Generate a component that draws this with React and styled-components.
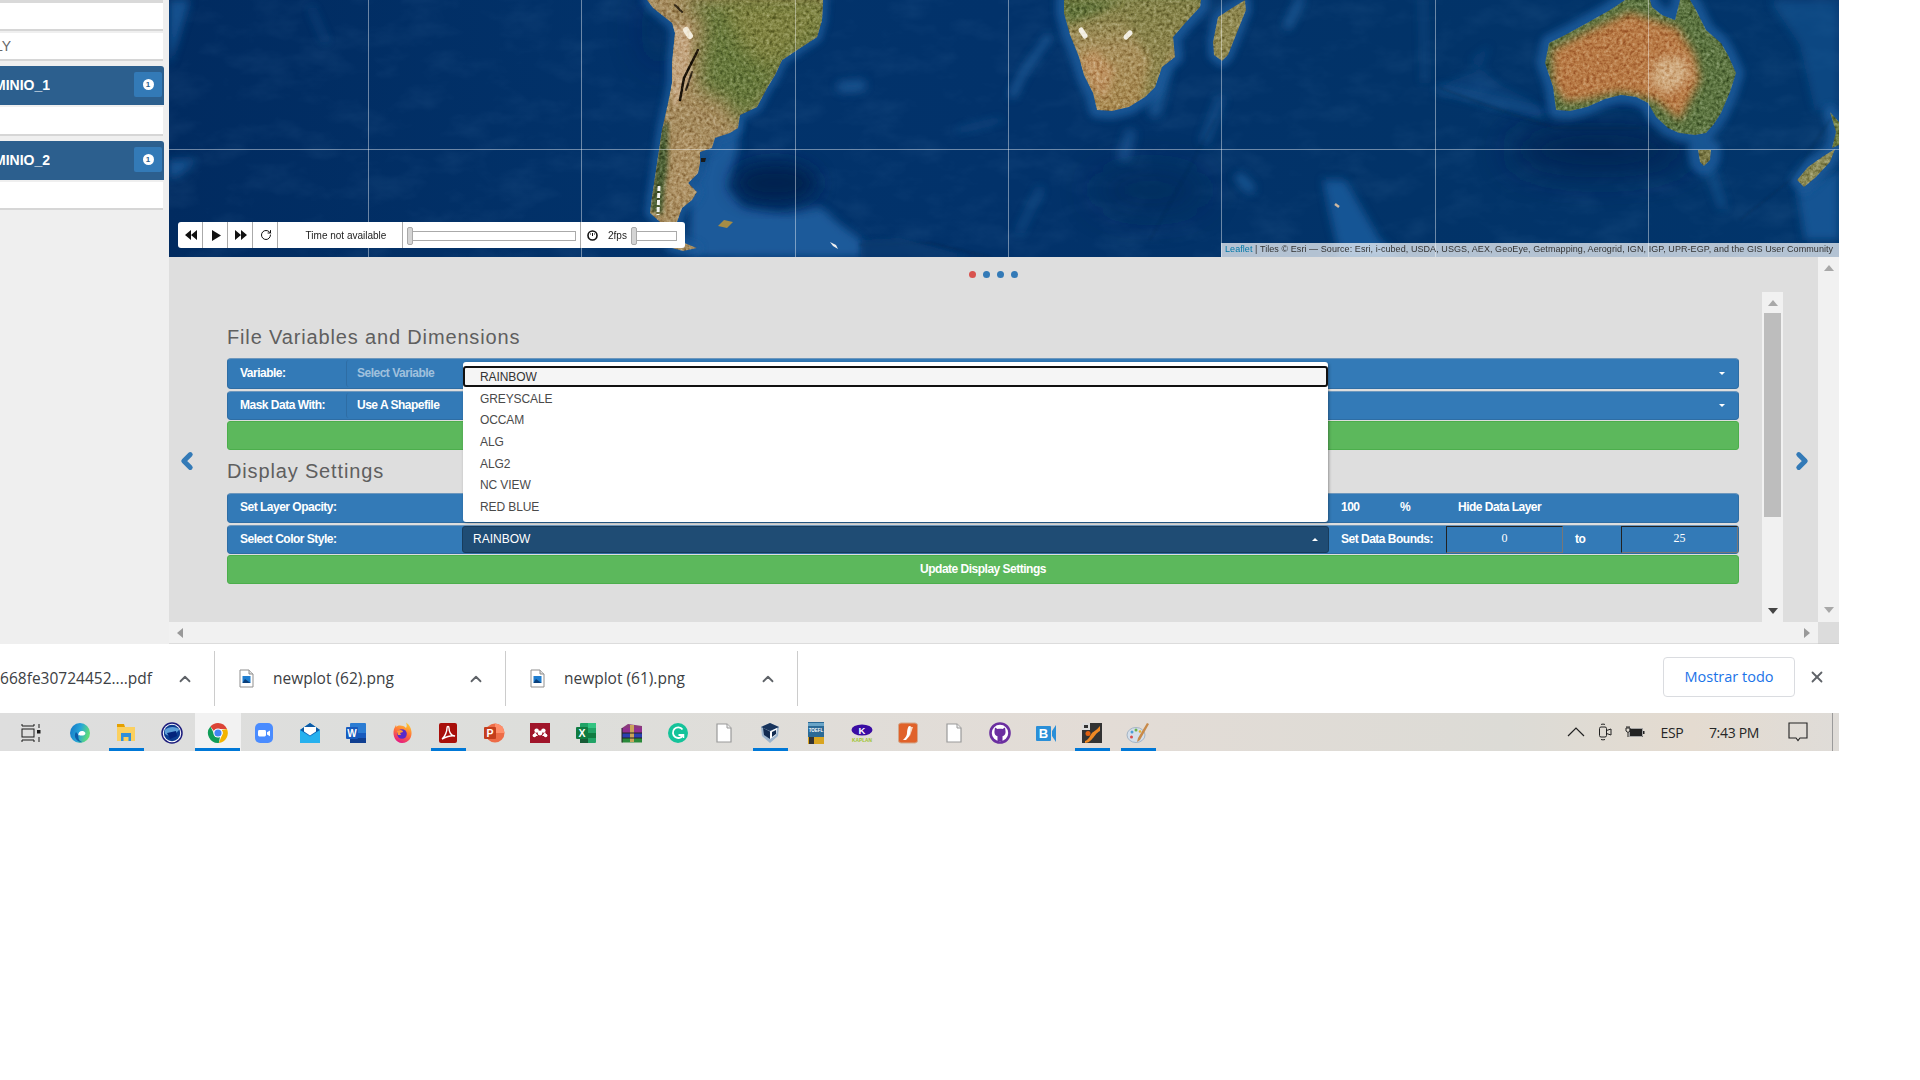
import React from "react";
import styled, { createGlobalStyle } from "styled-components";
import { ChevronUp, ChevronLeft, ChevronRight, X, RotateCw } from "lucide-react";

const Global = createGlobalStyle`
  html, body { margin: 0; padding: 0; background: #fff; }
  body { font-family: "Liberation Sans", Arial, sans-serif; }
  * { box-sizing: border-box; }
`;

const Page = styled.div`
  width: 1839px;
  height: 751px;
  display: flex;
  flex-direction: column;
  overflow: hidden;
`;
const Upper = styled.div`
  display: flex;
  height: 644px;
  flex: none;
`;
const Sidebar = styled.aside`
  width: 169px;
  flex: none;
  background: #efefef;
  display: flex;
  flex-direction: column;
  align-items: flex-start;
`;
const Card = styled.div`
  width: 163px;
  height: ${(p) => p.$h}px;
  margin-top: ${(p) => p.$mt || 0}px;
  background: #fff;
  border-top: ${(p) => (p.$top ? "3px solid #d9d9d9" : "none")};
  border-bottom: 2px solid #d6d6d6;
  display: flex;
  align-items: center;
  font-size: 14px;
  color: #666;
`;
const Clip = styled.div`
  width: ${(p) => p.$w}px;
  overflow: hidden;
  display: flex;
  justify-content: flex-end;
  white-space: nowrap;
`;
const LayerHead = styled.div`
  width: 164px;
  height: 39px;
  margin-top: ${(p) => p.$mt}px;
  background: #2c5f8e;
  border-radius: 0 3px 0 0;
  display: flex;
  align-items: center;
  justify-content: space-between;
  padding: 0 2px 2px 0;
  color: #fff;
  font-weight: bold;
  font-size: 14px;
`;
const InfoBtn = styled.div`
  width: 28px;
  height: 25px;
  background: #337ab7;
  border-radius: 2px;
  display: flex;
  align-items: center;
  justify-content: center;
  color: #2c5f8e;
  font-size: 8px;
  font-weight: bold;
  & > span {
    width: 11px;
    height: 11px;
    border-radius: 50%;
    background: #fff;
    display: flex;
    align-items: center;
    justify-content: center;
  }
`;
const Main = styled.main`
  flex: 1;
  display: flex;
  flex-direction: column;
  min-width: 0;
`;
const MapBox = styled.div`
  position: relative;
  height: 257px;
  flex: none;
  overflow: hidden;
  background: #02346b;
  & > svg { display: block; }
`;
const Controls = styled.div`
  position: absolute;
  left: 9px;
  top: 222px;
  width: 507px;
  height: 26px;
  background: #fff;
  border-radius: 3px;
  display: flex;
  align-items: stretch;
  font-size: 10px;
  color: #222;
`;
const CtlBtn = styled.div`
  width: 25px;
  flex: none;
  border-right: 1px solid #aaa;
  display: flex;
  align-items: center;
  justify-content: center;
  padding-left: 2px;
  color: #111;
`;
const TimeLabel = styled.div`
  width: 125px;
  flex: none;
  border-right: 1px solid #aaa;
  display: flex;
  align-items: center;
  justify-content: center;
  padding-left: 12px;
`;
const TimeSlider = styled.div`
  width: 178px;
  flex: none;
  border-right: 1px solid #aaa;
  display: flex;
  align-items: center;
  padding-left: 7px;
`;
const Track = styled.div`
  position: relative;
  width: ${(p) => p.$w}px;
  height: 10px;
  border: 1px solid #aaa;
  margin-top: 1px;
`;
const Thumb = styled.div`
  position: absolute;
  left: -4px;
  top: -5px;
  width: 6px;
  height: 18px;
  background: #d4d4d4;
  border: 1px solid #aaa;
  border-radius: 2px;
`;
const SpeedBox = styled.div`
  flex: 1;
  display: flex;
  align-items: center;
  padding-left: 6px;
`;
const FpsText = styled.span`
  margin: 0 7px 0 10px;
  width: 19px;
  white-space: nowrap;
`;
const Attribution = styled.div`
  position: absolute;
  right: 0;
  bottom: 0;
  width: 618px;
  height: 14px;
  background: rgba(255, 255, 255, 0.7);
  color: #333;
  font-size: 9px;
  letter-spacing: 0.07px;
  line-height: 13px;
  padding-left: 4px;
  white-space: nowrap;
  overflow: hidden;
  & > b { color: #0078a8; font-weight: normal; }
`;
const Panel = styled.div`
  flex: 1;
  display: flex;
  min-height: 0;
`;
const PanelLeft = styled.div`
  flex: 1;
  display: flex;
  flex-direction: column;
  min-width: 0;
`;
const Content = styled.div`
  height: 365px;
  background: #dedede;
  display: flex;
  flex-direction: column;
`;
const Dots = styled.div`
  height: 35px;
  flex: none;
  display: flex;
  align-items: center;
  justify-content: center;
  gap: 7px;
`;
const Dot = styled.span`
  width: 7px;
  height: 7px;
  border-radius: 50%;
  background: ${(p) => (p.$on ? "#d9534f" : "#337ab7")};
`;
const Carousel = styled.div`
  flex: 1;
  display: flex;
  min-height: 0;
`;
const ArrowCol = styled.div`
  width: ${(p) => p.$w}px;
  flex: none;
  display: flex;
  align-items: center;
  padding-left: ${(p) => p.$pl}px;
  padding-top: 7px;
  color: #337ab7;
`;
const Form = styled.div`
  width: 1512px;
  flex: none;
  margin-right: 23px;
  display: flex;
  flex-direction: column;
`;
const Heading = styled.h3`
  margin: ${(p) => p.$mt}px 0 0;
  font-size: 20px;
  line-height: 20px;
  font-weight: normal;
  letter-spacing: 0.85px;
  color: #5f5f5f;
  white-space: nowrap;
`;
const Row = styled.div`
  height: ${(p) => p.$h}px;
  margin-top: ${(p) => p.$mt}px;
  background: #337ab7;
  border: 1px solid #2e6da4;
  border-top-color: #6d97bd;
  border-radius: 4px;
  display: flex;
  align-items: center;
  color: #fff;
  font-size: 12px;
  font-weight: bold;
  letter-spacing: -0.5px;
  position: relative;
`;
const Label = styled.div`
  width: ${(p) => p.$w}px;
  flex: none;
  padding-left: 12px;
  padding-bottom: 2px;
  white-space: nowrap;
`;
const AddonSelect = styled.div`
  flex: 1;
  align-self: stretch;
  margin: 1px 0 1px 0;
  border-left: 1px solid #2e6da4;
  border-radius: 3px 0 0 3px;
  display: flex;
  align-items: center;
  justify-content: space-between;
  padding: 0 13px 2px 10px;
  color: ${(p) => (p.$muted ? "rgba(255,255,255,0.55)" : "#fff")};
`;
const Caret = styled.span`
  width: 0;
  height: 0;
  margin-top: 2px;
  border-left: 3px solid transparent;
  border-right: 3px solid transparent;
  ${(p) => (p.$up ? "border-bottom: 3px solid #fff;" : "border-top: 3px solid #fff;")}
`;
const CaretWrap = styled.span`
  display: flex;
  color: #fff;
`;
const GreenBtn = styled.div`
  height: 29px;
  margin-top: 1px;
  background: #5cb85c;
  border: 1px solid #4cae4c;
  border-radius: 3px;
  color: #fff;
  font-size: 12px;
  letter-spacing: -0.5px;
  font-weight: bold;
  display: flex;
  align-items: center;
  justify-content: center;
  padding-bottom: 2px;
`;
const Spacer = styled.div`
  width: ${(p) => p.$w}px;
  flex: none;
`;
const Value = styled.div`
  width: ${(p) => p.$w}px;
  flex: none;
  padding-bottom: 2px;
  white-space: nowrap;
`;
const ColorSelect = styled.div`
  position: relative;
  width: 867px;
  flex: none;
  align-self: stretch;
  background: #1f4c74;
  border: 1px solid #183c5c;
  border-radius: 3px;
  display: flex;
  align-items: center;
  justify-content: space-between;
  padding: 0 10px 2px;
  font-weight: normal;
  letter-spacing: 0;
`;
const Dropdown = styled.div`
  position: absolute;
  left: 0;
  bottom: calc(100% + 5px);
  width: 865px;
  height: 160px;
  background: #fff;
  border-radius: 3px;
  box-shadow: 1px 1px 3px rgba(0, 0, 0, 0.35);
  padding-top: 4px;
  z-index: 5;
`;
const Option = styled.div`
  height: ${(p) => (p.$active ? 21 : 21.6)}px;
  margin-bottom: ${(p) => (p.$active ? 1 : 0)}px;
  padding-left: ${(p) => (p.$active ? 15 : 17)}px;
  display: flex;
  align-items: center;
  color: ${(p) => (p.$active ? "#333" : "#4a4a4a")};
  font-size: 12px;
  font-weight: normal;
  letter-spacing: -0.1px;
  background: ${(p) => (p.$active ? "#f5f5f5" : "transparent")};
  border: ${(p) => (p.$active ? "2px solid #111" : "none")};
  border-radius: ${(p) => (p.$active ? 3 : 0)}px;
`;
const BoundInput = styled.div`
  width: 117px;
  flex: none;
  align-self: stretch;
  border-top: 1px solid #222;
  border-left: 1px solid #222;
  border-bottom: 1px solid #777;
  border-right: 1px solid #777;
  display: flex;
  align-items: center;
  justify-content: center;
  padding-bottom: 2px;
  font-family: "Liberation Serif", serif;
  font-weight: normal;
  font-size: 12px;
  letter-spacing: 0;
`;
const InnerScroll = styled.div`
  width: 21px;
  flex: none;
  background: #f1f1f1;
  display: flex;
  flex-direction: column;
  align-items: center;
  padding-top: 8px;
`;
const ScrollThumb = styled.div`
  width: 17px;
  height: 204px;
  margin-top: 7px;
  background: #bdbdbd;
`;
const Tri = styled.span`
  width: 0;
  height: 0;
  flex: none;
  ${(p) =>
    p.$dir === "up"
      ? `border-left:5px solid transparent;border-right:5px solid transparent;border-bottom:6px solid ${p.$c};`
      : p.$dir === "down"
      ? `border-left:5px solid transparent;border-right:5px solid transparent;border-top:6px solid ${p.$c};`
      : p.$dir === "left"
      ? `border-top:5px solid transparent;border-bottom:5px solid transparent;border-right:6px solid ${p.$c};`
      : `border-top:5px solid transparent;border-bottom:5px solid transparent;border-left:6px solid ${p.$c};`}
  margin-top: ${(p) => (p.$auto ? "auto" : "0")};
  margin-bottom: ${(p) => p.$mb || 0}px;
`;
const HScroll = styled.div`
  height: 22px;
  flex: none;
  background: #f1f1f1;
  border-bottom: 1px solid #dcdcdc;
  display: flex;
  align-items: center;
  justify-content: space-between;
  padding: 0 8px;
`;
const OuterScroll = styled.div`
  width: 21px;
  flex: none;
  display: flex;
  flex-direction: column;
  align-items: center;
  background: #f1f1f1;
  padding-top: 8px;
`;
const Corner = styled.div`
  width: 21px;
  height: 22px;
  flex: none;
  background: #dcdcdc;
  border-bottom: 1px solid #d0d0d0;
`;
const Downloads = styled.div`
  height: 69px;
  flex: none;
  background: #fff;
  display: flex;
  align-items: center;
  font-family: "Open Sans", sans-serif;
  font-size: 15.5px;
  color: #3c4043;
`;
const DlItem = styled.div`
  width: ${(p) => p.$w}px;
  height: 55px;
  flex: none;
  border-right: 1px solid #ccc;
  display: flex;
  align-items: center;
  justify-content: ${(p) => (p.$end ? "flex-end" : "flex-start")};
  padding-left: ${(p) => (p.$end ? 0 : 24)}px;
  padding-right: 20px;
  overflow: hidden;
  white-space: nowrap;
  & > svg { flex: none; }
`;
const DlName = styled.span`
  margin-left: ${(p) => p.$ml || 0}px;
  flex: ${(p) => (p.$end ? "none" : 1)};
  margin-right: ${(p) => (p.$end ? 24 : 0)}px;
  padding-bottom: 1px;
`;
const ShowAll = styled.div`
  margin-left: auto;
  width: 132px;
  height: 40px;
  margin-top: -4px;
  border: 1px solid #dadce0;
  border-radius: 4px;
  color: #1a73e8;
  display: flex;
  align-items: center;
  justify-content: center;
  font-size: 14.5px;
  font-weight: 500;
  font-family: "Open Sans", sans-serif;
`;
const CloseBtn = styled.div`
  width: 44px;
  display: flex;
  justify-content: center;
  margin-top: -3px;
  color: #5f6368;
`;
const Taskbar = styled.footer`
  height: 38px;
  flex: none;
  background: linear-gradient(90deg, #dedede 0%, #dddedb 30%, #e3dcd6 60%, #dcdbd6 82%, #e4dbd0 92%, #dfdcd8 100%);
  display: flex;
  align-items: stretch;
  padding-left: 8px;
`;
const TaskItem = styled.div`
  width: ${(p) => p.$w || 46}px;
  flex: none;
  display: flex;
  align-items: center;
  justify-content: center;
  padding-top: 1px;
  padding-right: ${(p) => (p.$w ? 3 : 0)}px;
  position: relative;
  background: ${(p) => (p.$active ? "#f2f2f2" : "transparent")};
  &::after {
    content: "";
    display: ${(p) => (p.$run ? "block" : "none")};
    position: absolute;
    left: 6px;
    right: 5px;
    bottom: 0;
    height: 3px;
    background: #0078d7;
    ${(p) => (p.$active ? "left:0;right:1px;" : "")}
  }
`;
const Tray = styled.div`
  margin-left: auto;
  display: flex;
  align-items: center;
  color: #333;
  font-family: "Open Sans", sans-serif;
  font-size: 14px;
  padding-right: 6px;
`;
const TrayCell = styled.div`
  width: ${(p) => p.$w}px;
  margin-left: ${(p) => p.$ml}px;
  flex: none;
  display: flex;
  justify-content: center;
  white-space: nowrap;
  color: #262626;
  letter-spacing: ${(p) => p.$ls || 0}px;
`;
const TrayEnd = styled.div`
  width: 1px;
  height: 100%;
  margin-left: 24px;
  background: #9a9a9a;
`;

const LAND = {
  sa: "M647 0L653 8L672 23L675 33L672 63L672 83L668 103L662 130L658 157L652 197L650 213L660 222L677 240L697 248L683 251L672 248L677 222L682 208L692 200L697 192L688 183L698 173L700 163L700 152L712 148L715 138L730 133L738 128L740 115L757 107L767 88L775 75L782 60L797 50L817 37L822 20L823 0Z",
  af: "M1064 0L1064 13L1070 35L1079 57L1084 75L1093 93L1097 110L1112 111L1129 107L1145 97L1155 87L1162 67L1175 57L1173 37L1186 22L1200 7L1201 0Z",
  mg: "M1245 0L1246 10L1236 35L1228 55L1222 61L1214 55L1213 42L1218 17L1232 8Z",
  au: "M1625 0L1610 10L1587 23L1565 35L1549 43L1545 63L1553 87L1556 110L1570 111L1587 107L1605 99L1621 95L1636 97L1648 103L1656 117L1668 128L1679 133L1695 135L1706 133L1714 124L1721 113L1730 92L1736 73L1728 55L1721 43L1706 30L1696 10L1690 0L1680 0L1675 20L1662 15L1652 7L1650 0Z",
  tas: "M1698 150L1711 150L1710 160L1704 166L1700 162Z",
  nzs: "M1797 180L1808 167L1822 157L1835 149L1830 162L1815 178L1804 187Z",
  nzn: "M1830 112L1839 122L1839 145L1832 148L1836 132Z",
};

const WorldMap = () => (
  <svg width="1670" height="257" viewBox="169 0 1670 257">
    <defs>
      <filter id="b1" x="-20%" y="-20%" width="140%" height="140%"><feGaussianBlur stdDeviation="1" /></filter>
      <filter id="b2" x="-20%" y="-20%" width="140%" height="140%"><feGaussianBlur stdDeviation="2" /></filter>
      <filter id="b3" x="-20%" y="-20%" width="140%" height="140%"><feGaussianBlur stdDeviation="3.5" /></filter>
      <filter id="b4" x="-30%" y="-30%" width="160%" height="160%"><feGaussianBlur stdDeviation="4" /></filter>
      <filter id="b8" x="-40%" y="-40%" width="180%" height="180%"><feGaussianBlur stdDeviation="9" /></filter>
      <filter id="b16" x="-40%" y="-40%" width="180%" height="180%"><feGaussianBlur stdDeviation="18" /></filter>
      <filter id="grain" x="0" y="0" width="100%" height="100%" colorInterpolationFilters="sRGB">
        <feTurbulence type="fractalNoise" baseFrequency="0.3" numOctaves="3" seed="4" result="n" />
        <feColorMatrix in="n" type="matrix" values="0.7 0.7 0 0 -0.2  0.7 0.7 0 0 -0.2  0.7 0.7 0 0 -0.2  0 0 0 0 1" result="g" />
        <feBlend in="g" in2="SourceGraphic" mode="soft-light" result="m" />
        <feComposite in="m" in2="SourceAlpha" operator="in" />
      </filter>
      <filter id="mott" x="0" y="0" width="100%" height="100%">
        <feTurbulence type="fractalNoise" baseFrequency="0.02 0.04" numOctaves="4" seed="9" />
        <feColorMatrix type="matrix" values="0 0 0 0 0.25  0 0 0 0 0.5  0 0 0 0 0.8  1.6 0 0 0 -0.72" />
      </filter>
      <linearGradient id="oc" x1="0" x2="1" y1="0" y2="0">
        <stop offset="0" stopColor="#012b60" />
        <stop offset="0.3" stopColor="#02336b" />
        <stop offset="0.5" stopColor="#02326a" />
        <stop offset="0.75" stopColor="#023368" />
        <stop offset="1" stopColor="#02356b" />
      </linearGradient>
      <linearGradient id="af" x1="0" x2="0" y1="0" y2="1">
        <stop offset="0" stopColor="#7d8046" />
        <stop offset="0.4" stopColor="#a8905c" />
        <stop offset="1" stopColor="#a8884e" />
      </linearGradient>
      <clipPath id="saC"><path d={LAND.sa} /></clipPath>
      <clipPath id="afC"><path d={LAND.af} /></clipPath>
      <clipPath id="auC"><path d={LAND.au} /></clipPath>
    </defs>
    <rect x="169" y="0" width="1670" height="257" fill="url(#oc)" />
    <rect x="169" y="0" width="1670" height="257" filter="url(#mott)" opacity="0.1" />

    <g filter="url(#b16)" fill="#012150" opacity="0.9">
      <ellipse cx="1600" cy="150" rx="90" ry="22" />
      <ellipse cx="1150" cy="190" rx="60" ry="24" opacity="0.4" />
      <ellipse cx="660" cy="30" rx="20" ry="40" opacity="0.3" />
    </g>
    <g filter="url(#b4)" fill="#1a5a9a">
      <path d="M715 138L740 115L738 150L728 187L743 207L787 213L820 207L842 226L862 240L862 257L690 257L690 190Z" />
      <path d="M169 0L190 0L178 40L169 66Z" opacity="0.8" />
      <path d="M169 160L196 160L180 175L169 178Z" opacity="0.8" />
      <path d="M1323 180L1345 180L1380 240L1400 257L1340 257L1330 215Z" opacity="0.9" />
      <path d="M1434 88L1470 98L1510 110L1549 118L1530 100L1500 85L1470 60L1490 45L1480 70Z" opacity="0.3" />
      <path d="M1797 190L1839 170L1839 240L1805 240Z" opacity="0.85" />
      <path d="M1770 0L1800 45L1815 110L1839 110L1839 0Z" opacity="0.5" />
    </g>
    <ellipse cx="775" cy="183" rx="42" ry="20" fill="#012150" filter="url(#b8)" />
    <g filter="url(#b4)" fill="none" stroke="#2a6cab" strokeLinecap="round">
      <path d="M1048 38L1025 70L1012 95" strokeWidth="6" opacity="0.7" />
      <path d="M1000 120L960 130" strokeWidth="4" opacity="0.3" />
      <path d="M1220 100L1205 140" strokeWidth="10" opacity="0.4" />
      <path d="M1130 135L1124 155" strokeWidth="12" opacity="0.45" />
      <path d="M1155 110L1165 70" strokeWidth="14" opacity="0.55" />
      <path d="M1240 178L1250 188" strokeWidth="10" opacity="0.6" />
      <path d="M843 87L860 85" strokeWidth="12" opacity="0.5" />
      <path d="M1040 190L1020 230" strokeWidth="7" opacity="0.35" />
      <path d="M1300 0L1288 25" strokeWidth="8" opacity="0.6" />
      <path d="M312 10L325 40" strokeWidth="6" opacity="0.25" />
      <path d="M1423 0L1425 80" strokeWidth="7" opacity="0.25" />
      <path d="M1440 90L1540 112" strokeWidth="8" opacity="0.3" />
      <path d="M1710 170L1722 205" strokeWidth="9" opacity="0.4" />
    </g>
    <g filter="url(#b3)" fill="none" stroke="#1a5c9b" strokeLinejoin="round" opacity="0.85">
      <path d={LAND.sa} strokeWidth="10" />
      <path d={LAND.af} strokeWidth="16" />
      <path d={LAND.mg} strokeWidth="11" />
      <path d={LAND.au} strokeWidth="16" />
      <path d={LAND.tas} strokeWidth="20" />
      <path d={LAND.nzs} strokeWidth="14" />
      <path d={LAND.nzn} strokeWidth="14" />
    </g>
    <g fill="none" stroke="#0a2a4c" strokeLinecap="round" opacity="0.35" filter="url(#b1)">
      <path d="M1440 88L1500 110L1555 128L1640 128" strokeWidth="2" />
      <path d="M1740 220L1790 180L1830 120" strokeWidth="1.5" />
      <path d="M860 245L930 243L990 257" strokeWidth="2" />
      <path d="M1150 240L1215 120" strokeWidth="1.2" />
    </g>
    <path d="M862 240L900 238L970 257L860 257Z" fill="#0c3d72" opacity="0.7" filter="url(#b2)" />

    <g filter="url(#grain)">
      <g clipPath="url(#saC)">
        <rect x="640" y="0" width="190" height="257" fill="#a68c5e" />
        <path d="M680 0L830 0L825 40L790 60L770 100L742 125L725 100L700 90L700 60L705 20Z" fill="#66783a" filter="url(#b8)" />
        <path d="M720 0L830 0L820 30L770 70L740 45Z" fill="#7f8240" filter="url(#b8)" />
        <path d="M672 25L690 25L690 80L675 110L670 85Z" fill="#c2a47e" filter="url(#b2)" />
        <path d="M660 130L668 120L668 165L662 215L650 210Z" fill="#4a5d30" filter="url(#b2)" />
        <path d="M680 130L700 140L700 175L690 200L675 220L668 190Z" fill="#ad9164" filter="url(#b4)" />
        <g fill="none" stroke="#1a1208" strokeLinecap="round">
          <path d="M698 50L690 66L684 78L680 100" strokeWidth="2.5" />
          <path d="M675 5L682 12" strokeWidth="2" opacity="0.8" />
          <path d="M692 72L686 90" strokeWidth="2" opacity="0.8" />
        </g>
        <path d="M686 30L690 36" stroke="#f2ead8" strokeWidth="6" strokeLinecap="round" />
        <path d="M659 186L658 215" stroke="#f4f4f0" strokeWidth="3" strokeDasharray="5 2" />
      </g>
      <g clipPath="url(#afC)">
        <rect x="1060" y="0" width="145" height="120" fill="url(#af)" />
        <path d="M1125 0L1205 0L1170 60L1160 95L1140 105L1150 60L1130 30Z" fill="#858248" filter="url(#b4)" opacity="0.75" />
        <path d="M1060 0L1120 0L1100 12L1066 25Z" fill="#64743a" filter="url(#b4)" />
        <path d="M1078 60L1095 50L1115 70L1105 100L1092 90Z" fill="#bd9361" filter="url(#b4)" />
        <path d="M1081 30L1085 36" stroke="#f2eee2" strokeWidth="5" strokeLinecap="round" />
        <path d="M1126 37L1130 33" stroke="#f2eee2" strokeWidth="5" strokeLinecap="round" />
      </g>
      <path d={LAND.mg} fill="#8f8850" />
      <g clipPath="url(#auC)">
        <rect x="1540" y="0" width="200" height="140" fill="#5c7440" />
        <path d="M1552 50L1590 30L1630 12L1678 28L1695 55L1700 80L1680 120L1655 100L1620 92L1585 100L1565 102L1553 85Z" fill="#b87a44" filter="url(#b4)" />
        <path d="M1655 60L1682 55L1692 75L1670 95L1650 85Z" fill="#d0aa7e" filter="url(#b4)" />
      </g>
      <path d={LAND.tas} fill="#7c7a46" />
      <path d={LAND.nzs} fill="#8b8a55" />
      <path d={LAND.nzn} fill="#6b7a3e" />
    </g>
    <path d="M718 226L724 220L733 222L727 228Z" fill="#a58c45" />
    <path d="M830 242L836 245L838 249L833 246Z" fill="#f0f0f0" />
    <path d="M701 158L706 158L705 162L701 162Z" fill="#1a1a1a" />
    <path d="M1335 204L1339 207" stroke="#d0b8a0" strokeWidth="2.5" />

    <g stroke="#ffffff" strokeOpacity="0.42" strokeWidth="1">
      {[368.5, 581.5, 795.5, 1008.5, 1221.5, 1435.5, 1648.5].map((x) => (
        <line key={x} x1={x} x2={x} y1="0" y2="257" />
      ))}
      <line x1="169" x2="1839" y1="149.5" y2="149.5" />
    </g>
  </svg>
);

const Svg = ({ children, w = 22, h = 22, vb = "0 0 22 22" }) => (
  <svg width={w} height={h} viewBox={vb}>{children}</svg>
);

const DocIcon = () => (
  <Svg w={16} h={20} vb="0 0 16 20">
    <path d="M1 1H11L15 5V19H1Z" fill="#fff" stroke="#9a9a9a" strokeWidth="1.2" />
    <path d="M11 1V5H15" fill="#eee" stroke="#9a9a9a" />
  </Svg>
);
const ICONS = {
  taskview: (
    <Svg w={20} h={20} vb="0 0 20 20">
      <g fill="none" stroke="#1a1a1a" strokeWidth="1">
        <path d="M1 1V3H13V1" />
        <rect x="1" y="6" width="12" height="8" />
        <path d="M1 19V17H13V19" />
        <path d="M18 1V5M18 14V19" />
      </g>
      <rect x="16" y="7" width="3.5" height="3.5" fill="#1a1a1a" />
    </Svg>
  ),
  edge: (
    <Svg>
      <defs>
        <linearGradient id="e1" x1="0" x2="1" y1="0" y2="0.3">
          <stop offset="0" stopColor="#1173c4" />
          <stop offset="0.55" stopColor="#27a5d8" />
          <stop offset="1" stopColor="#5fdc7a" />
        </linearGradient>
      </defs>
      <circle cx="11" cy="11" r="10" fill="url(#e1)" />
      <path d="M9 14C9 10 12 8 15 9.5C17 10.5 17 13 14 13.4C12.5 13.6 11 13.5 10 13" fill="#fff" />
      <path d="M7 10C4 14 7 21 15 20.3C12 20.5 8.5 18 9.5 13Z" fill="#0d5da8" />
    </Svg>
  ),
  files: (
    <Svg>
      <path d="M2 2H9L10 5H2Z" fill="#e5a000" />
      <rect x="2" y="5" width="18" height="14" fill="#fbd060" />
      <path d="M6 19V11H16V19H13.5V15H8.5V19Z" fill="#2f8fdc" />
    </Svg>
  ),
  globe: (
    <Svg>
      <circle cx="11" cy="11" r="10" fill="#fff" stroke="#1c1c7c" strokeWidth="1.5" />
      <circle cx="11" cy="11" r="8.2" fill="#0b3c90" />
      <path d="M3.5 8C8 4 15 4 18.5 7.5L15 11L10 15L4 12Z" fill="#5d9fd8" />
      <path d="M6 11L15 9L16 14L9 17Z" fill="#03247c" />
    </Svg>
  ),
  chrome: (
    <Svg>
      <path d="M11 1A10 10 0 0 1 20 7H11A4 4 0 0 0 7 9L3.4 4.5A10 10 0 0 1 11 1Z" fill="#db4437" />
      <path d="M20 7A10 10 0 0 1 11.8 21L15 13A4 4 0 0 0 14.5 8Z" fill="#f4b400" />
      <path d="M11.8 21A10 10 0 0 1 3.4 4.5L7.4 12.5A4 4 0 0 0 13 14.7Z" fill="#0f9d58" />
      <circle cx="11" cy="11" r="4.6" fill="#fff" />
      <circle cx="11" cy="11" r="3.6" fill="#4285f4" />
    </Svg>
  ),
  zoom: (
    <Svg>
      <rect x="2" y="1" width="18" height="20" rx="5" fill="#4a8cff" />
      <rect x="5" y="8" width="8" height="6.5" rx="1.4" fill="#fff" />
      <path d="M14 10.3L17 8.4V14.2L14 12.4Z" fill="#fff" />
    </Svg>
  ),
  mail: (
    <Svg>
      <path d="M1 8L11 1L21 8V21H1Z" fill="#1e9be6" />
      <path d="M1 8L11 1L21 8L11 14Z" fill="#0c5aa6" />
      <path d="M5 5H17V9.5L11 13.6L5 9.5Z" fill="#fff" />
      <path d="M1 8L11 15L21 8V21H1Z" fill="#26b1ee" />
    </Svg>
  ),
  word: (
    <Svg>
      <rect x="5" y="1" width="16" height="20" rx="1" fill="#2b7cd3" />
      <rect x="5" y="11" width="16" height="5" fill="#185abd" />
      <rect x="5" y="16" width="16" height="5" fill="#103f91" />
      <rect x="1" y="5" width="12" height="12" rx="1" fill="#185abd" />
      <text x="7" y="15" fontSize="10" fontWeight="bold" fill="#fff" textAnchor="middle" fontFamily="Liberation Sans">W</text>
    </Svg>
  ),
  firefox: (
    <Svg>
      <defs>
        <linearGradient id="ff" x1="0.7" x2="0.3" y1="0" y2="1">
          <stop offset="0" stopColor="#ffcb2e" />
          <stop offset="0.5" stopColor="#ff7139" />
          <stop offset="1" stopColor="#e31587" />
        </linearGradient>
      </defs>
      <path d="M3 7C1 14 5 21 11 21C18 21 21 15 20.5 10C20 5 17.5 2 15 0.5C16 3 16 4.5 15 6C12 3 7 3 5.5 5L5 3Z" fill="url(#ff)" />
      <circle cx="11" cy="12" r="4.8" fill="#592acb" />
      <path d="M6 9C9 7 12 8 12 10L9 11L10 13L7 13Z" fill="#ff9a3a" />
    </Svg>
  ),
  acrobat: (
    <Svg>
      <rect x="2" y="1" width="18" height="20" rx="2" fill="#a80f0a" />
      <path d="M5 17C8 15 10 9 10 6C10 4 12 4 12 6C12 10 14 14 18 14C14 13 9 15 5 17Z" fill="none" stroke="#fff" strokeWidth="1.4" />
    </Svg>
  ),
  ppt: (
    <Svg>
      <circle cx="12" cy="11" r="9.5" fill="#ed6c47" />
      <path d="M12 1.5A9.5 9.5 0 0 1 21.5 11H12Z" fill="#ff8f6b" />
      <rect x="1" y="5" width="12" height="12" rx="1" fill="#c43e1c" />
      <text x="7" y="15" fontSize="10.5" fontWeight="bold" fill="#fff" textAnchor="middle" fontFamily="Liberation Sans">P</text>
    </Svg>
  ),
  mendeley: (
    <Svg>
      <rect x="1" y="1" width="20" height="20" fill="#a0152a" />
      <g fill="#fff">
        <circle cx="11" cy="11" r="2.4" />
        <circle cx="7.6" cy="8.6" r="2.2" />
        <circle cx="14.4" cy="8.6" r="2.2" />
        <circle cx="5.4" cy="13.5" r="1.8" />
        <circle cx="16.6" cy="13.5" r="1.8" />
        <path d="M6 10L9 14H4ZM16 10L18 14H13Z" />
      </g>
    </Svg>
  ),
  excel: (
    <Svg>
      <rect x="5" y="1" width="16" height="20" rx="1" fill="#21a366" />
      <rect x="13" y="1" width="8" height="5" fill="#33c481" />
      <rect x="5" y="11" width="8" height="10" fill="#185c37" />
      <rect x="13" y="11" width="8" height="5" fill="#107c41" />
      <rect x="1" y="5" width="12" height="12" rx="1" fill="#107c41" />
      <text x="7" y="15" fontSize="10.5" fontWeight="bold" fill="#fff" textAnchor="middle" fontFamily="Liberation Sans">X</text>
    </Svg>
  ),
  rar: (
    <Svg>
      <path d="M1 6L7 2L21 4V8L7 8L1 6Z" fill="#8a3a7c" />
      <rect x="1" y="6" width="20" height="5" fill="#8f2f90" />
      <rect x="1" y="11" width="20" height="5" fill="#2a3fb0" />
      <rect x="1" y="16" width="20" height="4.5" fill="#2a8a3a" />
      <rect x="9" y="3" width="4" height="17" fill="#c9a35a" />
      <path d="M1 6V20.5M1 11H21M1 16H21" stroke="#222" strokeWidth="1" />
    </Svg>
  ),
  grammarly: (
    <Svg>
      <circle cx="11" cy="11" r="10" fill="#15c39a" />
      <path d="M15.5 7.5A5.3 5.3 0 1 0 16 13H11.5" fill="none" stroke="#fff" strokeWidth="1.8" />
      <path d="M16.5 13V16" stroke="#fff" strokeWidth="1.5" />
    </Svg>
  ),
  doc: <DocIcon />,
  vbox: (
    <Svg>
      <path d="M11 1L20 5L19 14L11 21L3 14L2 5Z" fill="#9cb4cc" />
      <path d="M11 1L20 5L11 9L2 5Z" fill="#18345c" />
      <path d="M4 6L11 9.5V17L5 13Z" fill="#112a4f" />
      <path d="M18 6L11 9.5V17L17 13Z" fill="#fff" />
      <path d="M13 10L17 8V12L13 15Z" fill="#112a4f" />
    </Svg>
  ),
  toefl: (
    <Svg w={16} h={22} vb="0 0 16 22">
      <rect width="16" height="22" fill="#2b6a96" />
      <rect y="1" width="16" height="3" fill="#6aa5c8" />
      <text x="8" y="10" fontSize="4.5" fontWeight="bold" fill="#fff" textAnchor="middle" fontFamily="Liberation Sans">TOEFL</text>
      <rect y="15" width="16" height="7" fill="#d9a521" />
      <rect x="1" y="15" width="5" height="7" fill="#333" />
    </Svg>
  ),
  kaplan: (
    <Svg w={24} h={20} vb="0 0 24 20">
      <ellipse cx="12" cy="7" rx="10.5" ry="5.5" fill="#3a0ca3" />
      <text x="12" y="10.5" fontSize="9.5" fontWeight="bold" fill="#fff" textAnchor="middle" fontFamily="Liberation Sans">K</text>
      <text x="12" y="18.5" fontSize="4.8" fontWeight="bold" fill="#9cc42c" textAnchor="middle" fontFamily="Liberation Sans">KAPLAN</text>
    </Svg>
  ),
  foxit: (
    <Svg>
      <rect x="1.5" y="1" width="19" height="20" rx="2.5" fill="#e0622a" />
      <rect x="1.5" y="1" width="19" height="20" rx="2.5" fill="none" stroke="#d4a98c" strokeWidth="1" />
      <path d="M12 4C14 4 15 5 14.5 7L12.5 14L9 18L6 18C9 15 10 13 10 11C10 8 11 5 12 4Z" fill="#fff" />
      <path d="M13.5 5H16L13 14Z" fill="#f7d6c0" />
    </Svg>
  ),
  github: (
    <Svg>
      <circle cx="11" cy="11" r="9.5" fill="#fff" stroke="#6b2fa0" strokeWidth="2.6" />
      <path d="M6 5.5L8.5 7C10 6.6 12 6.6 13.5 7L16 5.5L16.5 9C17 12 15 14 13.5 14.3V19H8.5V14.3C7 14 5 12 5.5 9Z" fill="#6b2fa0" />
    </Svg>
  ),
  bluejeans: (
    <Svg>
      <rect x="1" y="4" width="15" height="15" rx="1" fill="#2a8fd8" />
      <text x="8.5" y="16" fontSize="13" fontWeight="bold" fill="#fff" textAnchor="middle" fontFamily="Liberation Sans">B</text>
      <path d="M17 9L21 3V20L17 14Z" fill="#2a8fd8" />
    </Svg>
  ),
  sublime: (
    <Svg>
      <rect x="1" y="1" width="20" height="20" fill="#333" />
      <rect x="1" y="1" width="8" height="7" fill="#ddd" />
      <rect x="3" y="3" width="4" height="3" fill="#333" />
      <path d="M4 19C8 18 9 13 11 11C13 9 16 8 19 4V9C15 11 14 14 12 16C10 18 8 21 4 21Z" fill="#f08a24" />
      <circle cx="7" cy="11.5" r="2.5" fill="#e06010" />
    </Svg>
  ),
  paint: (
    <Svg w={24} h={22} vb="0 0 24 22">
      <ellipse cx="10" cy="13" rx="9" ry="7.5" fill="#d5dfea" stroke="#94a8bd" strokeWidth="0.8" />
      <circle cx="6" cy="10" r="1.5" fill="#4c9bd8" />
      <circle cx="10" cy="8" r="1.5" fill="#6ab04c" />
      <circle cx="14" cy="9.5" r="1.3" fill="#e8b030" />
      <circle cx="5.5" cy="15" r="1.5" fill="#d84c4c" />
      <path d="M21 1L23 2L14 18L11 20L12 16Z" fill="#c88a4a" />
    </Svg>
  ),
};

const TASK = [
  ["taskview", { w: 49 }], ["edge"], ["files", { run: 1 }], ["globe"], ["chrome", { run: 1, active: 1 }], ["zoom"], ["mail"], ["word"],
  ["firefox"], ["acrobat", { run: 1 }], ["ppt"], ["mendeley"], ["excel"], ["rar"], ["grammarly"], ["doc"],
  ["vbox", { run: 1 }], ["toefl"], ["kaplan"], ["foxit"], ["doc"], ["github"], ["bluejeans"], ["sublime", { run: 1 }], ["paint", { run: 1 }],
];

const PngIcon = () => (
  <svg width="15" height="19" viewBox="0 0 15 19" style={{ flex: "none" }}>
    <path d="M1 1H10L14 5V18H1Z" fill="#fff" stroke="#8f8f8f" />
    <path d="M10 1V5H14" fill="#ddd" stroke="#8f8f8f" />
    <rect x="3.5" y="7" width="8" height="7" fill="#1f7ed0" />
    <path d="M3.5 14L6 10L11.5 14Z" fill="#0b3f7a" />
  </svg>
);

const OPTIONS = ["GREYSCALE", "OCCAM", "ALG", "ALG2", "NC VIEW", "RED BLUE"];

export default function App() {
  return (
    <>
      <Global />
      <Page>
        <Upper>
          <Sidebar>
            <Card $h={31} $top />
            <Card $h={28} $mt={2}>
              <Clip $w={11}>ONLY</Clip>
            </Card>
            <LayerHead $mt={5}>
              <Clip $w={50}>DOMINIO_1</Clip>
              <InfoBtn><span>1</span></InfoBtn>
            </LayerHead>
            <Card $h={29} $mt={2} />
            <LayerHead $mt={5}>
              <Clip $w={50}>DOMINIO_2</Clip>
              <InfoBtn><span>1</span></InfoBtn>
            </LayerHead>
            <Card $h={28} $mt={2} />
          </Sidebar>
          <Main>
            <MapBox>
              <WorldMap />
              <Controls>
                <CtlBtn>
                  <svg width="12" height="10" viewBox="0 0 12 10"><path d="M6 0V10L0 5ZM12 0V10L6 5Z" fill="#111" /></svg>
                </CtlBtn>
                <CtlBtn>
                  <svg width="9" height="11" viewBox="0 0 9 11"><path d="M0 0L9 5.5L0 11Z" fill="#111" /></svg>
                </CtlBtn>
                <CtlBtn>
                  <svg width="12" height="10" viewBox="0 0 12 10"><path d="M0 0V10L6 5ZM6 0V10L12 5Z" fill="#111" /></svg>
                </CtlBtn>
                <CtlBtn><RotateCw size={12} strokeWidth={2} /></CtlBtn>
                <TimeLabel>Time not available</TimeLabel>
                <TimeSlider>
                  <Track $w={166}><Thumb /></Track>
                </TimeSlider>
                <SpeedBox>
                  <svg width="11" height="11" viewBox="0 0 11 11">
                    <circle cx="5.5" cy="5.5" r="4.5" fill="none" stroke="#111" strokeWidth="1.6" />
                    <path d="M3 4H4M7 4H8M5.5 3V6" stroke="#111" strokeWidth="1" />
                  </svg>
                  <FpsText>2fps</FpsText>
                  <Track $w={43}><Thumb /></Track>
                </SpeedBox>
              </Controls>
              <Attribution>
                <b>Leaflet</b> | Tiles © Esri — Source: Esri, i-cubed, USDA, USGS, AEX, GeoEye, Getmapping, Aerogrid, IGN, IGP, UPR-EGP, and the GIS User Community
              </Attribution>
            </MapBox>
            <Panel>
              <PanelLeft>
                <Content>
                  <Dots>
                    <Dot $on /><Dot /><Dot /><Dot />
                  </Dots>
                  <Carousel>
                    <ArrowCol $w={58} $pl={5}>
                      <ChevronLeft size={26} strokeWidth={4.5} />
                    </ArrowCol>
                    <Form>
                      <Heading $mt={35}>File Variables and Dimensions</Heading>
                      <Row $h={31} $mt={11}>
                        <Label $w={118}>Variable:</Label>
                        <AddonSelect $muted>
                          <span>Select Variable</span>
                          <CaretWrap><Caret /></CaretWrap>
                        </AddonSelect>
                      </Row>
                      <Row $h={29} $mt={2}>
                        <Label $w={118}>Mask Data With:</Label>
                        <AddonSelect>
                          <span>Use A Shapefile</span>
                          <CaretWrap><Caret /></CaretWrap>
                        </AddonSelect>
                      </Row>
                      <GreenBtn>Update File Variables</GreenBtn>
                      <Heading $mt={11}>Display Settings</Heading>
                      <Row $h={30} $mt={12}>
                        <Label $w={234}>Set Layer Opacity:</Label>
                        <Spacer $w={879} />
                        <Value $w={59}>100</Value>
                        <Value $w={58}>%</Value>
                        <Value $w={200}>Hide Data Layer</Value>
                      </Row>
                      <Row $h={29} $mt={2}>
                        <Label $w={234}>Select Color Style:</Label>
                        <ColorSelect>
                          <span>RAINBOW</span>
                          <CaretWrap><Caret $up /></CaretWrap>
                          <Dropdown>
                            <Option $active>RAINBOW</Option>
                            {OPTIONS.map((o) => (
                              <Option key={o}>{o}</Option>
                            ))}
                          </Dropdown>
                        </ColorSelect>
                        <Label $w={117}>Set Data Bounds:</Label>
                        <BoundInput>0</BoundInput>
                        <Label $w={58}>to</Label>
                        <BoundInput>25</BoundInput>
                      </Row>
                      <GreenBtn>Update Display Settings</GreenBtn>
                    </Form>
                    <InnerScroll>
                      <Tri $dir="up" $c="#a8a8a8" />
                      <ScrollThumb />
                      <Tri $dir="down" $c="#444" $auto $mb={8} />
                    </InnerScroll>
                    <ArrowCol $w={35} $pl={6}>
                      <ChevronRight size={26} strokeWidth={4.5} />
                    </ArrowCol>
                  </Carousel>
                </Content>
                <HScroll>
                  <Tri $dir="left" $c="#999" />
                  <Tri $dir="right" $c="#999" />
                </HScroll>
              </PanelLeft>
              <OuterScroll>
                <Tri $dir="up" $c="#a8a8a8" />
                <Tri $dir="down" $c="#a8a8a8" $auto $mb={9} />
                <Corner />
              </OuterScroll>
            </Panel>
          </Main>
        </Upper>
        <Downloads>
          <DlItem $w={215} $end>
            <DlName $end>h668fe30724452....pdf</DlName>
            <ChevronUp size={18} color="#5f6368" strokeWidth={2.4} />
          </DlItem>
          <DlItem $w={291}>
            <PngIcon />
            <DlName $ml={19}>newplot (62).png</DlName>
            <ChevronUp size={18} color="#5f6368" strokeWidth={2.4} />
          </DlItem>
          <DlItem $w={292}>
            <PngIcon />
            <DlName $ml={19}>newplot (61).png</DlName>
            <ChevronUp size={18} color="#5f6368" strokeWidth={2.4} />
          </DlItem>
          <ShowAll>Mostrar todo</ShowAll>
          <CloseBtn><X size={18} strokeWidth={2.4} /></CloseBtn>
        </Downloads>
        <Taskbar>
          {TASK.map(([name, o = {}], i) => (
            <TaskItem key={i} $w={o.w} $run={o.run} $active={o.active}>{ICONS[name]}</TaskItem>
          ))}
          <Tray>
            <TrayCell $w={18} $ml={0}>
              <svg width="18" height="10" viewBox="0 0 18 10"><path d="M1 9L9 1L17 9" fill="none" stroke="#222" strokeWidth="1.2" /></svg>
            </TrayCell>
            <TrayCell $w={14} $ml={13}>
              <svg width="14" height="20" viewBox="0 0 14 20" fill="none" stroke="#222" strokeWidth="1">
                <rect x="1.5" y="5" width="7" height="10" rx="1.5" />
                <path d="M8.5 8.5L13 7V13L8.5 11.5M3 2.5C4 2 6 2 7 2.5M3 17.5C4 18 6 18 7 17.5" />
              </svg>
            </TrayCell>
            <TrayCell $w={20} $ml={13}>
              <svg width="20" height="14" viewBox="0 0 20 14">
                <rect x="4" y="3" width="14" height="9" fill="#222" />
                <rect x="4.5" y="3.5" width="13" height="8" fill="none" stroke="#fff" strokeWidth="0.6" />
                <rect x="18" y="6" width="1.5" height="3" fill="#222" />
                <path d="M1 3H5V6L3 7.5L1 6ZM2 1V3M4 1V3M3 7.5V12" fill="none" stroke="#222" strokeWidth="1" />
              </svg>
            </TrayCell>
            <TrayCell $w={24} $ml={15} $ls={-0.3}>ESP</TrayCell>
            <TrayCell $w={52} $ml={24} $ls={-0.3}>7:43 PM</TrayCell>
            <TrayCell $w={20} $ml={28}>
              <svg width="20" height="20" viewBox="0 0 20 20"><path d="M1 1H19V16H12L10 18.5L8 16H1Z" fill="none" stroke="#222" strokeWidth="1.1" /></svg>
            </TrayCell>
            <TrayEnd />
          </Tray>
        </Taskbar>
      </Page>
    </>
  );
}
